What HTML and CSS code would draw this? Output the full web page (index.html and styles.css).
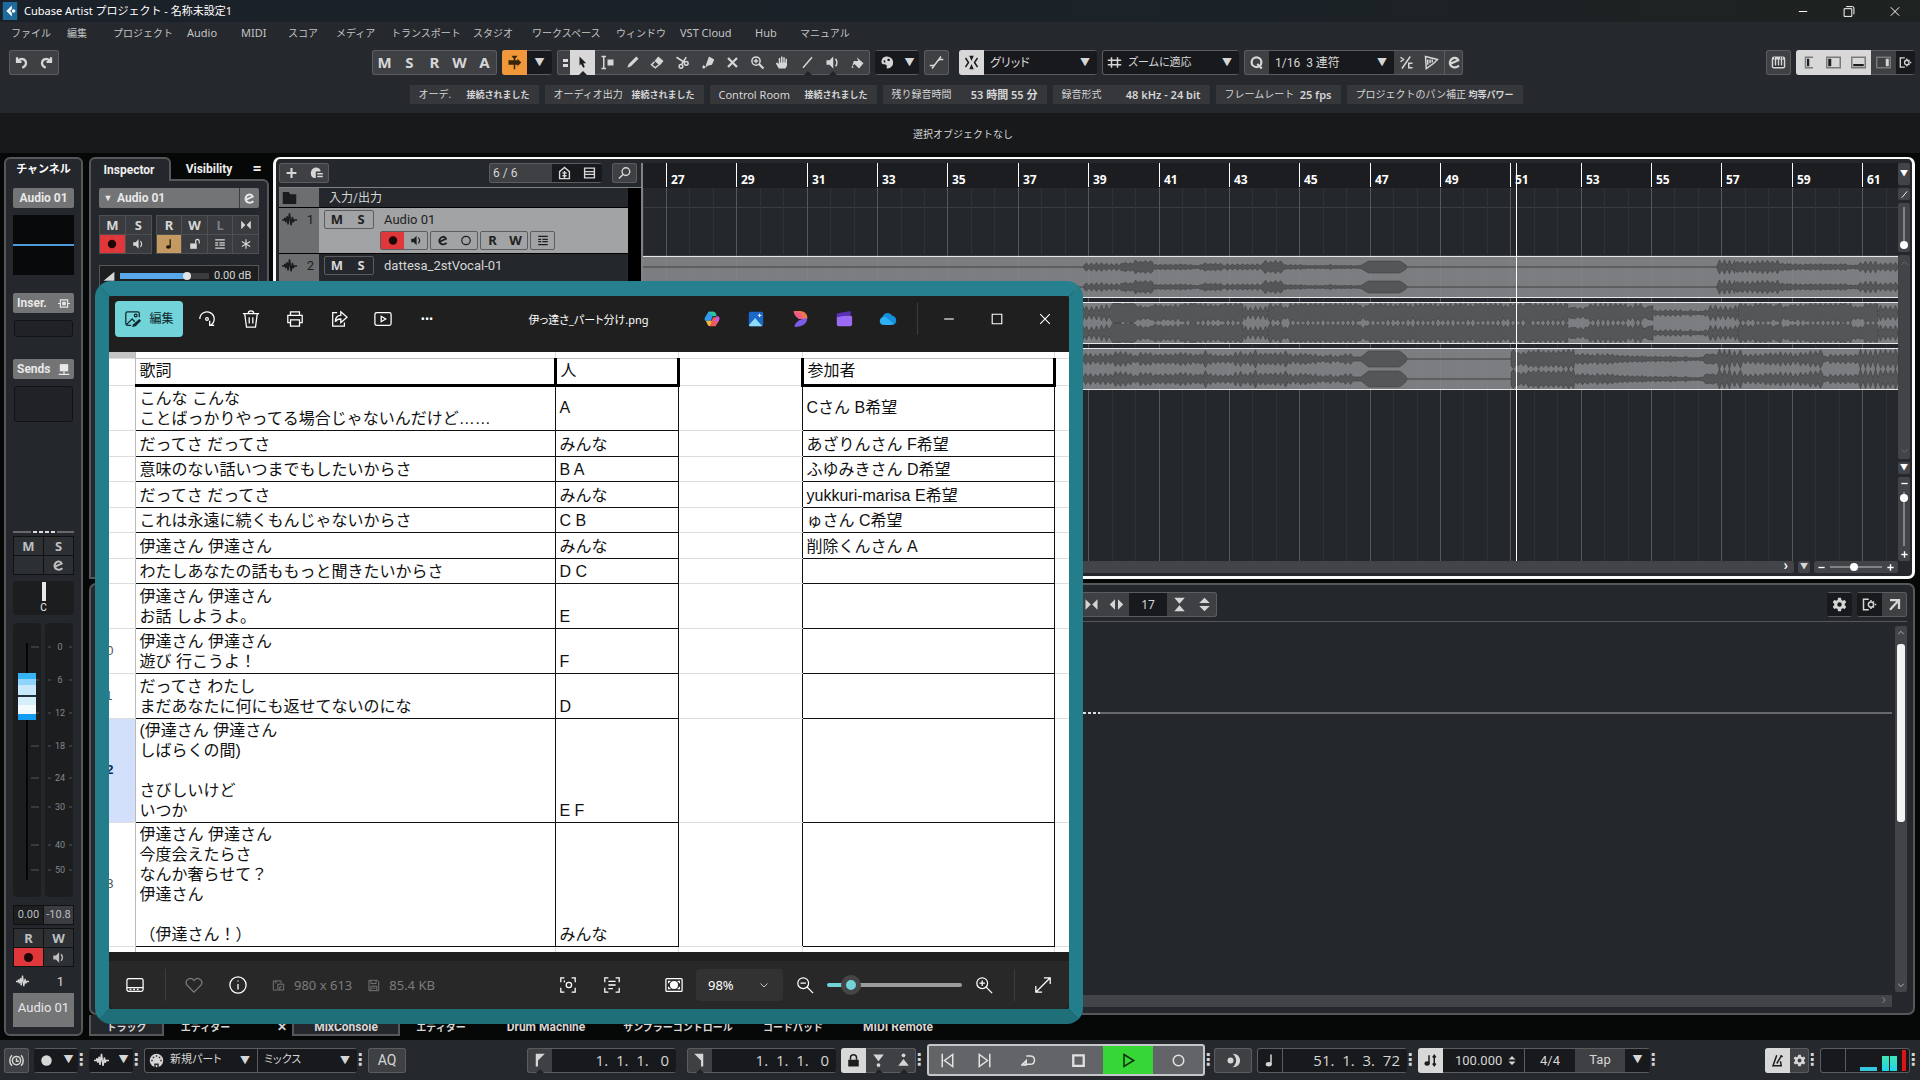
FILE: index.html
```html
<!DOCTYPE html>
<html lang="ja">
<head>
    <meta charset="UTF-8">
    <meta name="viewport" content="width=device-width, initial-scale=1.0">
    <title>Cubase Artist プロジェクト - 名称未設定1</title>
    <link rel="stylesheet" href="styles.css">
</head>
<body>
    <!-- icons -->
    <svg class="sprite" width="0" height="0">
        <symbol id="i-undo" viewBox="0 0 20 20"><path class="s3" d="M4 3v6h6M5 8c3-4 11-4 11 3 0 4-3 5-5 6"/></symbol>
        <symbol id="i-redo" viewBox="0 0 20 20"><path class="s3" d="M16 3v6h-6M15 8c-3-4-11-4-11 3 0 4 3 5 5 6"/></symbol>
        <symbol id="i-auto" viewBox="0 0 20 20"><path class="f" d="M6 1h8l-3 4v2h3V5l5 5-5 5v-2h-3v6H9v-6H2V7h7V5z"/></symbol>
        <symbol id="i-arrow" viewBox="0 0 20 20"><path class="f" d="M6 2l9 9h-4l2 5-2 1-3-5-2 2z"/></symbol>
        <symbol id="i-range" viewBox="0 0 20 20"><path class="s" d="M2 2h6M5 2v16M2 18h6"/><path class="f" d="M10 6h8v8h-8z"/></symbol>
        <symbol id="i-pencil" viewBox="0 0 20 20"><path class="f" d="M3 17l2-5L15 2l3 3L8 15z"/></symbol>
        <symbol id="i-eraser" viewBox="0 0 20 20"><path class="f" d="M11 2l7 6-5 6-7-6z"/><path class="s" d="M6 9l-4 4 5 4 5-4"/></symbol>
        <symbol id="i-scissors" viewBox="0 0 20 20"><path class="s" d="M2 3l11 7M9 12l6-9"/><circle class="s" cx="15" cy="11" r="2.5"/><circle class="s" cx="8" cy="15" r="2.5"/></symbol>
        <symbol id="i-glue" viewBox="0 0 20 20"><path class="f" d="M12 2l7 4-3 7-5 1-4 3 2-7zM5 13l2 3a2 2 0 1 1-4 0z"/></symbol>
        <symbol id="i-x" viewBox="0 0 20 20"><path class="s3" d="M4 4l12 12M16 4L4 16"/></symbol>
        <symbol id="i-zoom" viewBox="0 0 20 20"><circle class="s" cx="8" cy="8" r="5.5"/><path class="s" d="M8 5v6M5 8h6"/><path class="s3" d="M12 12l6 6"/></symbol>
        <symbol id="i-hand" viewBox="0 0 20 20"><path class="f" d="M5 18L1 11l2-1 2 2V4h2v6h1V2h2v8h1V3h2v7h1V5h2v9l-2 4z"/></symbol>
        <symbol id="i-line" viewBox="0 0 20 20"><path class="s" d="M4 17L16 3"/></symbol>
        <symbol id="i-speaker" viewBox="0 0 20 20"><path class="f" d="M2 7h4l5-5v16l-5-5H2z"/><path class="s" d="M14 5q4 5 0 10"/></symbol>
        <symbol id="i-paint" viewBox="0 0 20 20"><path class="f" d="M9 3l9 8-6 7-6-6-3 3 2-7h6zM3 14l2 3H2z"/></symbol>
        <symbol id="i-palette" viewBox="0 0 20 20"><path class="f" fill-rule="evenodd" d="M9 2a8 8 0 1 1 1 16c-3 0 1-4-2-5s-6 0-6-4 3-7 7-7zm-4 5h2v3H5zm5-2h3v3h-3z"/></symbol>
        <symbol id="i-curve" viewBox="0 0 20 20"><path class="s" d="M1 14h4c6 0 4-8 10-8h4M4 18L16 2"/></symbol>
        <symbol id="i-snap" viewBox="0 0 20 20"><path class="s" d="M2 4l4 6-4 6M18 4l-4 6 4 6"/><path class="f" d="M7 1h6l-3 7zM7 19h6l-3-7z"/></symbol>
        <symbol id="i-grid" viewBox="0 0 20 20"><path class="s" d="M6 3v14M14 3v14M1 7h18M1 13h18"/></symbol>
        <symbol id="i-q" viewBox="0 0 20 20"><circle class="s3" cx="10" cy="9.500" r="6.500"/><path class="s3" d="M11 12l6 6"/></symbol>
        <symbol id="i-pct" viewBox="0 0 20 20"><path class="s" d="M4 18L15 2M2 3l4 3-4 3M18 11h-5v6h5"/></symbol>
        <symbol id="i-warp" viewBox="0 0 20 20"><path class="s" d="M2 2l16 4-5 5-10 7zM5 6v7M8 6v5M11 6v4"/></symbol>
        <symbol id="i-e" viewBox="0 0 20 20"><path class="s3" d="M4 12L15 7c-2-5-9-4-11 2-1 7 7 10 12 5"/></symbol>
        <symbol id="i-keys" viewBox="0 0 20 20"><rect class="f" x="1" y="2" width="18" height="16" rx="3"/><path class="k" d="M4 6v9h12V6M8 6v9M12 6v9M4 4h1M12 4h1M15 4h1"/></symbol>
        <symbol id="i-gear" viewBox="0 0 20 20"><path class="f" fill-rule="evenodd" d="M8 1h4l.5 3 2 1L17 4l2 3-2 2v2l2 2-2 3-2.500-1-2 1-.5 3H8l-.5-3-2-1L3 16l-2-3 2-2V9L1 7l2-3 2.500 1 2-1zM10 7a3 3 0 1 0 0 6 3 3 0 0 0 0-6z"/></symbol>
        <symbol id="i-setup" viewBox="0 0 20 20"><path class="s" d="M9 3H2v14h7"/><circle class="s" cx="12" cy="10" r="3.500"/><path class="s" d="M12 4v2M12 14v2M17 10h2M16 6l-1 1M16 14l-1-1"/></symbol>
        <symbol id="i-plus" viewBox="0 0 20 20"><path class="s3" d="M10 3v14M3 10h14"/></symbol>
        <symbol id="i-minus" viewBox="0 0 20 20"><path class="s3" d="M3 10h14"/></symbol>
        <symbol id="i-preset" viewBox="0 0 20 20"><path class="f" d="M9 2a7 7 0 0 1 7 6H9v9C-1 18 0 3 9 2z"/><path class="s" d="M11 11h8M11 15h8"/></symbol>
        <symbol id="i-house" viewBox="0 0 20 20"><path class="s" d="M3 8l7-6 7 6v10H3zM7 10h6M7 14h6M10 7v10"/></symbol>
        <symbol id="i-list" viewBox="0 0 20 20"><path class="s" d="M3 3h14v14H3zM3 8h14M3 12h14"/></symbol>
        <symbol id="i-search" viewBox="0 0 20 20"><circle class="s" cx="12" cy="8" r="5.500"/><path class="s" d="M8 12l-6 6"/></symbol>
        <symbol id="i-folder" viewBox="0 0 20 20"><path class="f" d="M1 2h8l2 3h8v13H1z"/></symbol>
        <symbol id="i-wave" viewBox="0 0 20 20"><path class="s" d="M0 10h3l1-3 1 6 2-8 1 11 2-15 2 16 2-11 1 7 1-3h4"/></symbol>
        <symbol id="i-dot" viewBox="0 0 20 20"><circle class="f" cx="10" cy="10" r="7"/></symbol>
        <symbol id="i-ring" viewBox="0 0 20 20"><circle class="s" cx="10" cy="10" r="7"/></symbol>
        <symbol id="i-note" viewBox="0 0 20 20"><path class="s" d="M12 2v13"/><ellipse class="f" cx="9" cy="15" rx="4" ry="3"/></symbol>
        <symbol id="i-lock" viewBox="0 0 20 20"><path class="f" d="M3 9h14v9H3z"/><path class="s" d="M6 9V6c0-5 8-5 8 0v3"/></symbol>
        <symbol id="i-unlock" viewBox="0 0 20 20"><path class="f" d="M2 9h11v9H2z"/><path class="s" d="M11 9V6c0-5 6-5 6 0v3"/></symbol>
        <symbol id="i-lanes" viewBox="0 0 20 20"><path class="s" d="M2 3h16M2 17h16M2 8h5M9 8h9M2 12h5M9 12h9"/></symbol>
        <symbol id="i-star" viewBox="0 0 20 20"><path class="s" d="M10 2v16M3 6l14 8M17 6L3 14"/></symbol>
        <symbol id="i-bow" viewBox="0 0 20 20"><path class="f" d="M2 3l7 7-7 7zM18 3l-7 7 7 7z"/></symbol>
        <symbol id="i-spread" viewBox="0 0 20 20"><path class="f" d="M8 3v14l-7-7zM12 3v14l7-7z"/></symbol>
        <symbol id="i-hourglass" viewBox="0 0 20 20"><path class="f" d="M3 1h14l-7 8zM3 19h14l-7-8z"/></symbol>
        <symbol id="i-updown" viewBox="0 0 20 20"><path class="f" d="M10 1l7 7H3zM10 19l7-7H3z"/></symbol>
        <symbol id="i-popout" viewBox="0 0 20 20"><path class="s3" d="M4 4h12v12M16 4L4 17"/></symbol>
        <symbol id="i-insert" viewBox="0 0 20 20"><path class="s" d="M4 4h12v12H4zM0 10h4M16 10h4"/><path class="f" d="M7 7h6v6H7z"/></symbol>
        <symbol id="i-send" viewBox="0 0 20 20"><path class="f" d="M3 1h14v12H3z"/><path class="s" d="M1 18h18M10 13v5"/></symbol>
        <symbol id="i-ramp" viewBox="0 0 20 20"><path class="f" d="M1 18L19 3v15z"/></symbol>
        <symbol id="i-clock" viewBox="0 0 20 20"><circle class="s" cx="10" cy="10" r="5.500"/><path class="s" d="M10 7v4h3M4 3c-4 4-4 10 0 14M16 3c4 4 4 10 0 14"/></symbol>
        <symbol id="i-midi" viewBox="0 0 20 20"><circle class="f" cx="10" cy="10" r="9"/><path class="k" d="M3 10h2M5 6h2M9 4h2M13 6h2M15 10h2M8 19v-4h4v4"/></symbol>
        <symbol id="i-locl" viewBox="0 0 20 20"><path class="f" d="M5 1h12L8 10v8H5z"/></symbol>
        <symbol id="i-locr" viewBox="0 0 20 20"><path class="f" d="M15 1H3l9 9v8h3z"/></symbol>
        <symbol id="i-pin" viewBox="0 0 20 20"><path class="f" d="M3 2h14l-7 9z"/><circle class="f" cx="10" cy="16" r="2.500"/></symbol>
        <symbol id="i-pout" viewBox="0 0 20 20"><path class="f" d="M3 17h14l-7-9z"/><circle class="f" cx="10" cy="3" r="2.500"/></symbol>
        <symbol id="i-prev" viewBox="0 0 20 20"><path class="s" d="M3 1v18M17 2v16L6 10z"/></symbol>
        <symbol id="i-next" viewBox="0 0 20 20"><path class="s" d="M17 1v18M3 2v16l11-8z"/></symbol>
        <symbol id="i-cycle" viewBox="0 0 20 20"><path class="s" d="M7 4h5c8 0 8 11 0 11H4M1 16l6-6v6z"/></symbol>
        <symbol id="i-stop" viewBox="0 0 20 20"><path class="s3" d="M3 3h14v14H3z"/></symbol>
        <symbol id="i-play" viewBox="0 0 20 20"><path class="s" d="M4 2l13 8-13 8z"/></symbol>
        <symbol id="i-moon" viewBox="0 0 20 20"><circle class="f" cx="6" cy="10" r="4"/><path class="f" d="M9 1c13 0 13 18 0 18 6-5 6-13 0-18z"/></symbol>
        <symbol id="i-tempo" viewBox="0 0 20 20"><path class="s" d="M8 3v11M15 4v12M13 6l2-3 2 3M13 14l2 3 2-3"/><ellipse class="f" cx="5.500" cy="14" rx="3.500" ry="3"/></symbol>
        <symbol id="i-metro" viewBox="0 0 20 20"><path class="s" d="M9 3L4 17h11l-1-6M9 14l6-10M14 3l3 2"/></symbol>
        <!-- viewer -->
        <symbol id="i-edit" viewBox="0 0 20 20"><path class="t" d="M17 8V4a2 2 0 0 0-2-2H4a2 2 0 0 0-2 2v11a2 2 0 0 0 2 2h4M3 16l6-6 3 3"/><circle class="t" cx="13" cy="6" r="1.500"/><path class="f" d="M17 10l2 2-6 6-4 1 1-3z"/></symbol>
        <symbol id="i-rotate" viewBox="0 0 20 20"><path class="t" d="M2 10a8 8 0 1 1 12 7M13 12v5h5"/><circle class="t" cx="10" cy="10" r="1.500"/></symbol>
        <symbol id="i-trash" viewBox="0 0 20 20"><path class="t" d="M1 4h18M7 4c0-4 6-4 6 0M3 4l2 15h10l2-15M8 8v7M12 8v7"/></symbol>
        <symbol id="i-print" viewBox="0 0 20 20"><path class="t" d="M5 6V2h10v4M5 14H2V6h16v8h-3M5 11h10v7H5z"/></symbol>
        <symbol id="i-share" viewBox="0 0 20 20"><path class="t" d="M8 3H3v15h13v-4M12 2l7 6-7 6v-4c-3 0-5 1-6 3 0-4 2-7 6-7z"/></symbol>
        <symbol id="i-slides" viewBox="0 0 20 20"><rect class="t" x="1" y="3" width="18" height="14" rx="2"/><path class="t" d="M8 7l5 3-5 3z"/></symbol>
        <symbol id="i-min" viewBox="0 0 20 20"><path class="t" d="M4 10h12"/></symbol>
        <symbol id="i-max" viewBox="0 0 20 20"><path class="t" d="M4 4h12v12H4z"/></symbol>
        <symbol id="i-restore" viewBox="0 0 20 20"><path class="t" d="M3 6h11v11H3zM6 3h9a2 2 0 0 1 2 2v9"/></symbol>
        <symbol id="i-close" viewBox="0 0 20 20"><path class="t" d="M4 4l12 12M16 4L4 16"/></symbol>
        <symbol id="i-film" viewBox="0 0 20 20"><rect class="t" x="1" y="3" width="18" height="14" rx="2"/><path class="t" d="M1 13h18M4 15h2M8 15h2M12 15h2"/></symbol>
        <symbol id="i-heart" viewBox="0 0 20 20"><path class="t" d="M10 18l-8-8c-3-6 5-10 8-5 3-5 11-1 8 5z"/></symbol>
        <symbol id="i-info" viewBox="0 0 20 20"><circle class="t" cx="10" cy="10" r="9"/><path class="t" d="M10 9v6M10 5v1"/></symbol>
        <symbol id="i-dims" viewBox="0 0 20 20"><path class="t" d="M8 17H2V3h12v4M6 3v4M9 8h9v9H9zM12 17v-5h3"/></symbol>
        <symbol id="i-disk" viewBox="0 0 20 20"><path class="t" d="M3 2h13l2 2v14H3zM6 2v5h8V2M6 18v-7h9v7M8 14h5"/></symbol>
        <symbol id="i-scan" viewBox="0 0 20 20"><path class="t" d="M2 7V2h4M14 2h4v5M18 13v5h-4M6 18H2v-5"/><circle class="t" cx="11" cy="10" r="3"/><path class="t" d="M6 5v2"/></symbol>
        <symbol id="i-text" viewBox="0 0 20 20"><path class="t" d="M2 7V2h4M14 2h4v5M18 13v5h-4M6 18H2v-5M6 6h8M6 10h8M6 14h5"/></symbol>
        <symbol id="i-fit" viewBox="0 0 20 20"><rect class="t" x="1" y="3" width="18" height="14" rx="1"/><circle class="f" cx="10" cy="10" r="4.500"/><path class="t" d="M4 8V6h2M16 8V6h-2M4 12v2h2M16 12v2h-2"/></symbol>
        <symbol id="i-zout" viewBox="0 0 20 20"><circle class="t" cx="8" cy="8" r="6"/><path class="t" d="M5 8h6M12 12l7 7"/></symbol>
        <symbol id="i-zin" viewBox="0 0 20 20"><circle class="t" cx="8" cy="8" r="6"/><path class="t" d="M5 8h6M8 5v6M12 12l7 7"/></symbol>
        <symbol id="i-full" viewBox="0 0 20 20"><path class="t" d="M11 2h7v7M18 2L2 18M2 11v7h7"/></symbol>
        <symbol id="i-chev" viewBox="0 0 20 20"><path class="t" d="M3 7l7 7 7-7"/></symbol>
    </svg>

    <header class="top">
        <div class="titlebar">
            <svg class="logo" viewBox="0 0 16 20"><rect width="16" height="20" fill="#1f6a9c"/><path d="M10 4l-6 6 6 6v-4l-2-2 2-2z" fill="#fff"/><circle cx="12" cy="10" r="2" fill="#fff"/></svg>
            <h1>Cubase Artist プロジェクト - 名称未設定1</h1>
            <div class="winbtns">
                <button aria-label="最小化"><svg><use href="#i-min"/></svg></button>
                <button aria-label="元に戻す"><svg><use href="#i-restore"/></svg></button>
                <button aria-label="閉じる"><svg><use href="#i-close"/></svg></button>
            </div>
        </div>
        <nav class="menu">
            <a href="#">ファイル</a><a href="#">編集</a><a href="#">プロジェクト</a><a href="#" class="en">Audio</a><a href="#" class="en">MIDI</a><a href="#">スコア</a><a href="#">メディア</a><a href="#">トランスポート</a><a href="#">スタジオ</a><a href="#">ワークスペース</a><a href="#">ウィンドウ</a><a href="#" class="en">VST Cloud</a><a href="#" class="en">Hub</a><a href="#">マニュアル</a>
        </nav>
        <div class="toolbar">
            <div class="grp undo"><button><svg><use href="#i-undo"/></svg></button><button><svg><use href="#i-redo"/></svg></button></div>
            <div class="grp msr"><button>M</button><button>S</button><button>R</button><button>W</button><button>A</button></div>
            <div class="grp"><button class="orange"><svg><use href="#i-auto"/></svg></button><button class="dark tri">▼</button></div>
            <div class="grp">
                <span class="handle"></span>
                <button class="on mark"><svg><use href="#i-arrow"/></svg></button>
                <button><svg><use href="#i-range"/></svg></button>
                <button><svg><use href="#i-pencil"/></svg></button>
                <button><svg><use href="#i-eraser"/></svg></button>
                <button><svg><use href="#i-scissors"/></svg></button>
                <button><svg><use href="#i-glue"/></svg></button>
                <button><svg><use href="#i-x"/></svg></button>
                <button><svg><use href="#i-zoom"/></svg></button>
                <button><svg><use href="#i-hand"/></svg></button>
                <button class="mark"><svg><use href="#i-line"/></svg></button>
                <button class="mark"><svg><use href="#i-speaker"/></svg></button>
                <button><svg><use href="#i-paint"/></svg></button>
            </div>
            <div class="grp dark"><button class="dark"><svg><use href="#i-palette"/></svg></button><button class="dark tri sm">▼</button></div>
            <div class="grp"><button><svg><use href="#i-curve"/></svg></button></div>
            <div class="grp snap"><button class="on"><svg><use href="#i-snap"/></svg></button><label class="pick w113"><select aria-label="スナップ"><option>グリッド</option></select></label></div>
            <div class="grp dark"><span class="ic"><svg><use href="#i-grid"/></svg></span><label class="pick w112"><select aria-label="グリッドの種類"><option>ズームに適応</option></select></label></div>
            <div class="grp"><button><svg><use href="#i-q"/></svg></button><label class="pick w125"><select aria-label="クオンタイズ"><option>1/16&nbsp; 3 連符</option></select></label><button><svg><use href="#i-pct"/></svg></button><button><svg><use href="#i-warp"/></svg></button><button class="sep"><svg><use href="#i-e"/></svg></button></div>
            <div class="grp right"><button><svg><use href="#i-keys"/></svg></button></div>
            <div class="grp zones">
                <button class="on"><svg viewBox="0 0 20 20"><path class="z" d="M16 3H6v14h10"/><path class="zf" d="M8 5h3v10H8z"/></svg></button>
                <button class="on"><svg viewBox="0 0 20 20"><path class="z" d="M1 3h18v14H1z"/><path class="zf" d="M3 5h4v10H3z"/></svg></button>
                <button class="on"><svg viewBox="0 0 20 20"><path class="z" d="M1 3h18v14H1z"/><path class="zf" d="M3 12h14v3H3z"/></svg></button>
                <button><svg viewBox="0 0 20 20"><path class="z" d="M1 3h18v14H1z"/><path class="f" d="M13 5h4v10h-4z"/></svg></button>
                <button class="dark small"><svg><use href="#i-setup"/></svg></button>
            </div>
        </div>
        <ul class="status">
            <li>オーデ.<b>接続されました</b></li>
            <li>オーディオ出力<b>接続されました</b></li>
            <li class="en">Control Room<b>接続されました</b></li>
            <li>残り録音時間<b class="en">53 時間 55 分</b></li>
            <li>録音形式<b class="en">48 kHz - 24 bit</b></li>
            <li>フレームレート<b class="en">25 fps</b></li>
            <li>プロジェクトのパン補正<b>均等パワー</b></li>
        </ul>
    </header>
    <div class="infoline">選択オブジェクトなし</div>

    <main class="workspace">
        <aside class="channel">
            <h2>チャンネル</h2>
            <div class="tag">Audio 01</div>
            <div class="eq"></div>
            <button class="tag rack">Inser.<svg><use href="#i-insert"/></svg></button>
            <div class="slot"></div>
            <button class="tag rack sends">Sends<svg><use href="#i-send"/></svg></button>
            <div class="slot tall"></div>
            <div class="dash"></div>
            <div class="cells"><button>M</button><button>S</button><button aria-label="空"></button><button><svg><use href="#i-e"/></svg></button></div>
            <div class="pan"><i></i>C</div>
            <div class="fader">
                <svg class="scale" id="scale" viewBox="0 0 61 274"></svg>
                <input type="range" aria-label="フェーダー" min="0" max="100" value="82">
            </div>
            <div class="cells vals"><span>0.00</span><span class="lit">-10.8</span></div>
            <div class="cells"><button>R</button><button>W</button><button class="rec"><svg><use href="#i-dot"/></svg></button><button><svg><use href="#i-speaker"/></svg></button></div>
            <div class="num"><svg><use href="#i-wave"/></svg>1</div>
            <div class="name">Audio 01</div>
        </aside>

        <div class="stack">
            <div class="upper">
                <aside class="inspector">
                    <div class="tabs"><button class="active">Inspector</button><button class="vis">Visibility</button><button class="eqs">=</button></div>
                    <div class="inbody">
                        <div class="trk"><span class="tri">▼</span>Audio 01<button><svg><use href="#i-e"/></svg></button></div>
                        <div class="ingrid">
                            <div class="g2"><button>M</button><button>S</button><button class="rec"><svg><use href="#i-dot"/></svg></button><button><svg><use href="#i-speaker"/></svg></button></div>
                            <div class="g4"><button>R</button><button>W</button><button class="dim">L</button><button><svg><use href="#i-bow"/></svg></button><button class="tan"><svg><use href="#i-note"/></svg></button><button><svg><use href="#i-unlock"/></svg></button><button><svg><use href="#i-lanes"/></svg></button><button><svg><use href="#i-star"/></svg></button></div>
                        </div>
                        <div class="vol"><svg><use href="#i-ramp"/></svg><input type="range" aria-label="音量" min="0" max="100" value="78"><span>0.00 dB</span></div>
                    </div>
                </aside>

                <section class="project">
                    <div class="tracklist">
                        <div class="tlbar">
                            <div class="grp low"><button><svg><use href="#i-plus"/></svg></button><button><svg><use href="#i-preset"/></svg></button></div>
                            <div class="grp low count"><span>6 / 6</span><button class="dark"><svg><use href="#i-house"/></svg></button><button class="dark"><svg><use href="#i-list"/></svg></button></div>
                            <div class="grp low"><button><svg><use href="#i-search"/></svg></button></div>
                        </div>
                        <div class="tracks">
                            <div class="track io"><div class="no"><svg><use href="#i-folder"/></svg></div><p>入力/出力</p></div>
                            <div class="track sel">
                                <div class="no"><svg><use href="#i-wave"/></svg>1</div>
                                <div class="ms"><button>M</button><button>S</button></div>
                                <div class="tinfo"><p>Audio 01</p>
                                    <div class="row"><div class="ms"><button class="rec"><svg><use href="#i-dot"/></svg></button><button><svg><use href="#i-speaker"/></svg></button></div><div class="ms"><button><svg><use href="#i-e"/></svg></button><button><svg><use href="#i-ring"/></svg></button></div><div class="ms"><button>R</button><button>W</button></div><div class="ms"><button><svg><use href="#i-lanes"/></svg></button></div></div>
                                </div>
                            </div>
                            <div class="track">
                                <div class="no"><svg><use href="#i-wave"/></svg>2</div>
                                <div class="ms"><button>M</button><button>S</button></div>
                                <div class="tinfo"><p>dattesa_2stVocal-01</p></div>
                            </div>
                        </div>
                    </div>
                    <div class="timeline">
                        <div class="ruler" id="ruler"></div>
                        <div class="arrange" id="arrange">
                            <div class="lane first"></div>
                            <div class="lane"></div>
                            <svg class="clip" preserveAspectRatio="none" viewBox="0 0 1255 40"></svg>
                            <svg class="clip" preserveAspectRatio="none" viewBox="0 0 1255 40"></svg>
                            <svg class="clip" preserveAspectRatio="none" viewBox="0 0 1255 40"></svg>
                        </div>
                        <div class="hbar"><span class="track-h">&rsaquo;</span><button class="tri">▼</button><span class="zoomh"><svg><use href="#i-minus"/></svg><input type="range" aria-label="横ズーム" value="46"><svg><use href="#i-plus"/></svg></span></div>
                    </div>
                    <div class="vbar">
                        <button class="tri">▼</button>
                        <button class="sq"><svg><use href="#i-line"/></svg></button>
                        <span class="vz short"><input type="range" aria-label="波形ズーム" value="0"></span>
                        <span class="vscroll"><svg class="flip"><use href="#i-chev"/></svg><svg><use href="#i-chev"/></svg></span>
                        <button class="sq tri">▼</button>
                        <span class="vz"><svg><use href="#i-minus"/></svg><input type="range" aria-label="縦ズーム" value="96"><svg><use href="#i-plus"/></svg></span>
                    </div>
                </section>
            </div>

            <section class="lower">
                <div class="lowbar">
                    <div class="grp"><button><svg><use href="#i-bow"/></svg></button><button><svg><use href="#i-spread"/></svg></button><span class="field w38">17</span><button><svg><use href="#i-hourglass"/></svg></button><button><svg><use href="#i-updown"/></svg></button></div>
                    <div class="grp dark right"><button class="dark"><svg><use href="#i-gear"/></svg></button></div>
                    <div class="grp"><button class="dark"><svg><use href="#i-setup"/></svg></button><button><svg><use href="#i-popout"/></svg></button></div>
                </div>
                <div class="lowbody">
                    <div class="mixarea"><div class="rule"></div></div>
                    <div class="vthumb"><svg class="flip"><use href="#i-chev"/></svg><i></i><svg><use href="#i-chev"/></svg></div>
                </div>
                <div class="lowscroll">&rsaquo;</div>
            </section>
            <nav class="lowtabs">
                <a href="#" class="box t1">トラック</a><a href="#" class="t2">エディター</a><a href="#" class="t3">✕</a><a href="#" class="box t4">MixConsole</a><a href="#" class="t5">エディター</a><a href="#" class="t6">Drum Machine</a><a href="#" class="t7">サンプラーコントロール</a><a href="#" class="t8">コードパッド</a><a href="#" class="t9">MIDI Remote</a>
            </nav>
        </div>
    </main>

    <footer class="transport">
        <div class="grp"><button><svg><use href="#i-clock"/></svg></button></div>
        <div class="grp dark m5"><button class="dark"><svg><use href="#i-dot"/></svg></button><button class="dark tri sm">▼</button></div><span class="dots">⋮</span>
        <div class="grp dark m5"><button class="dark"><svg><use href="#i-wave"/></svg></button><button class="dark tri sm">▼</button></div><span class="dots">⋮</span>
        <div class="grp dark m5"><span class="ic"><svg><use href="#i-midi"/></svg></span><label class="pick w88"><select aria-label="MIDI録音"><option>新規パート</option></select></label><label class="pick w100 sep"><select aria-label="録音モード"><option>ミックス</option></select></label></div><span class="dots">⋮</span>
        <div class="grp m5"><button class="aq">AQ</button></div>
        <div class="grp loc"><button class="mark"><svg><use href="#i-locl"/></svg></button><span class="field pos">1.  1.  1.   0</span></div>
        <div class="grp m11"><button class="mark"><svg><use href="#i-locr"/></svg></button><span class="field pos">1.  1.  1.   0</span></div>
        <div class="grp m5"><button class="on"><svg><use href="#i-lock"/></svg></button><button class="mark"><svg><use href="#i-pin"/></svg></button><button class="mark"><svg><use href="#i-pout"/></svg></button></div><span class="dots">⋮</span>
        <div class="play">
            <button><svg><use href="#i-prev"/></svg></button><button><svg><use href="#i-next"/></svg></button><button class="wide"><svg><use href="#i-cycle"/></svg></button><button class="wide"><svg><use href="#i-stop"/></svg></button><button class="wide go"><svg><use href="#i-play"/></svg></button><button class="wide"><svg><use href="#i-ring"/></svg></button>
        </div><span class="dots">⋮</span>
        <div class="grp m3"><button class="moon"><svg><use href="#i-moon"/></svg></button></div>
        <div class="grp dark m5"><span class="ic"><svg><use href="#i-note"/></svg></span><span class="field time sep">51.  1.  3.  72</span></div><span class="dots">⋮</span>
        <div class="grp m5"><button class="on"><svg><use href="#i-tempo"/></svg></button><span class="field tempo">100.000<svg><use href="#i-updown"/></svg></span><span class="field sig sep">4/4</span><button class="tap">Tap</button><button class="dark tri">▼</button></div><span class="dots">⋮</span>
        <div class="grp right"><button class="on"><svg><use href="#i-metro"/></svg></button><button class="small"><svg><use href="#i-gear"/></svg></button></div><span class="dots">⋮</span>
        <div class="grp dark m5 meter"><i class="cell"></i><i class="b1"></i><i class="b2"></i><i class="b2"></i><i class="b3"></i></div><span class="dots">⋮</span>
    </footer>

    <!-- photo viewer -->
    <div class="viewer">
        <div class="vhead">
            <button class="edit"><svg><use href="#i-edit"/></svg>編集</button>
            <button><svg><use href="#i-rotate"/></svg></button>
            <button><svg><use href="#i-trash"/></svg></button>
            <button><svg><use href="#i-print"/></svg></button>
            <button><svg><use href="#i-share"/></svg></button>
            <button><svg><use href="#i-slides"/></svg></button>
            <button class="more">•••</button>
            <span class="fname">伊っ達さ_パート分け.png</span>
            <button><svg viewBox="0 0 20 20"><path d="M6 2h6l-3 10H3C1 12 2 8 3 7z" fill="#2f9bf0"/><path d="M6 2h6c2 0 3 3 3 5h-4z" fill="#2ec4a0"/><path d="M14 18H8l3-10h6c2 0 1 4 0 5z" fill="#f2585b"/><path d="M3 12h7l-2 6c-3 0-3-3-5-6z" fill="#f5b73b"/><path d="M15 7h2c2 1 1 4 0 6h-4z" fill="#c95bd8"/></svg></button>
            <button><svg viewBox="0 0 20 20"><rect x="2" y="2" width="16" height="16" rx="2" fill="#1c68c9"/><path d="M2 17l7-8 8 9H3z" fill="#8fdcf8"/><path d="M14 4v4M12 6h4" stroke="#fff"/></svg></button>
            <button><svg viewBox="0 0 20 20"><path d="M3 1h7c6 0 9 5 8 9H9z" fill="#f0764e"/><path d="M9 10c-3-2-6-5-6-9 7 1 10 4 10 9z" fill="#ee5a8a"/><path d="M18 9c0 6-5 10-14 10 0-5 5-9 14-10z" fill="#7b5bea"/></svg></button>
            <button><svg viewBox="0 0 20 20"><rect x="2" y="6" width="17" height="12" rx="2" fill="#9b6bf5"/><path d="M2 6V4l15-3 1 4-16 3z" fill="#5c2fb8"/></svg></button>
            <button><svg viewBox="0 0 22 20"><path d="M5 17a5 5 0 0 1-1-9c2-6 9-7 12-2 6 0 7 10 1 11z" fill="#1490df"/><path d="M4 8c3-2 6 0 7 2l7 6c-2 2-14 1-14 1-4-1-4-7 0-9z" fill="#2fb0f5"/></svg></button>
            <span class="vsep"></span>
            <button class="wb"><svg><use href="#i-min"/></svg></button><button class="wb"><svg><use href="#i-max"/></svg></button><button class="wb"><svg><use href="#i-close"/></svg></button>
        </div>
        <div class="sheet">
            <table>
                <colgroup><col class="c0"><col class="c1"><col class="c2"><col class="c3"><col class="c4"><col class="c5"></colgroup>
                <tr class="cut"><th class="corner"></th><td></td><td></td><td></td><td></td><td></td></tr>
                <tr class="hd"><th></th><td class="k">歌詞</td><td class="k">人</td><td></td><td class="k">参加者</td><td></td></tr>
                <tr class="r45"><th></th><td class="c">こんな こんな<br>ことばっかりやってる場合じゃないんだけど……</td><td class="c mid">A</td><td class="gap"></td><td class="c mid">Cさん B希望</td><td></td></tr>
                <tr><th></th><td class="c">だってさ だってさ</td><td class="c">みんな</td><td class="gap"></td><td class="c">あざりんさん F希望</td><td></td></tr>
                <tr><th></th><td class="c">意味のない話いつまでもしたいからさ</td><td class="c">B A</td><td class="gap"></td><td class="c">ふゆみきさん D希望</td><td></td></tr>
                <tr><th></th><td class="c">だってさ だってさ</td><td class="c">みんな</td><td class="gap"></td><td class="c">yukkuri-marisa E希望</td><td></td></tr>
                <tr><th></th><td class="c">これは永遠に続くもんじゃないからさ</td><td class="c">C B</td><td class="gap"></td><td class="c">ゅさん C希望</td><td></td></tr>
                <tr><th></th><td class="c">伊達さん 伊達さん</td><td class="c">みんな</td><td class="gap"></td><td class="c">削除くんさん A</td><td></td></tr>
                <tr><th></th><td class="c">わたしあなたの話ももっと聞きたいからさ</td><td class="c">D C</td><td class="gap"></td><td class="c"></td><td></td></tr>
                <tr class="r45"><th></th><td class="c">伊達さん 伊達さん<br>お話 しようよ。</td><td class="c">E</td><td class="gap"></td><td class="c"></td><td></td></tr>
                <tr class="r45"><th>10</th><td class="c">伊達さん 伊達さん<br>遊び 行こうよ！</td><td class="c">F</td><td class="gap"></td><td class="c"></td><td></td></tr>
                <tr class="r45"><th>11</th><td class="c">だってさ わたし<br>まだあなたに何にも返せてないのにな</td><td class="c">D</td><td class="gap"></td><td class="c"></td><td></td></tr>
                <tr class="r104"><th class="cur">12</th><td class="c">(伊達さん 伊達さん<br>しばらくの間)<br><br>さびしいけど<br>いつか</td><td class="c">E F</td><td class="gap"></td><td class="c"></td><td></td></tr>
                <tr class="r124"><th>13</th><td class="c">伊達さん 伊達さん<br>今度会えたらさ<br>なんか奢らせて？<br>伊達さん<br><br>（伊達さん！）</td><td class="c">みんな</td><td class="gap"></td><td class="c"></td><td></td></tr>
                <tr class="cut"><th></th><td></td><td></td><td></td><td></td><td></td></tr>
            </table>
        </div>
        <div class="vfoot">
            <button><svg><use href="#i-film"/></svg></button>
            <span class="vsep"></span>
            <button class="gray"><svg><use href="#i-heart"/></svg></button>
            <button><svg><use href="#i-info"/></svg></button>
            <span class="meta"><svg><use href="#i-dims"/></svg>980 x 613</span>
            <span class="meta"><svg><use href="#i-disk"/></svg>85.4 KB</span>
            <button class="right"><svg><use href="#i-scan"/></svg></button>
            <button><svg><use href="#i-text"/></svg></button>
            <button class="fit"><svg><use href="#i-fit"/></svg></button>
            <button class="pct">98%<svg><use href="#i-chev"/></svg></button>
            <button><svg><use href="#i-zout"/></svg></button>
            <input type="range" aria-label="ズーム" min="0" max="100" value="12">
            <button><svg><use href="#i-zin"/></svg></button>
            <span class="vsep"></span>
            <button><svg><use href="#i-full"/></svg></button>
        </div>
    </div>
    <script src="script.js"></script>
</body>
</html>
```
FILE: styles.css
```css
*{
    box-sizing: border-box;
    margin: 0;
    padding: 0;
    list-style: none;
}
body{
    display: flex;
    flex-direction: column;
    min-height: 100vh;
    background-color: #060707;
    color: #d6d6d6;
    font: 13px/16px Roboto, "Noto Sans CJK JP", sans-serif;
    font-feature-settings: "palt";
    overflow: hidden;
    position: relative;
}
button, select, input{
    font: inherit;
    color: inherit;
    border: 0;
    background: none;
}
button{
    display: flex;
    align-items: center;
    justify-content: center;
    flex-shrink: 0;
}
a{
    color: inherit;
    text-decoration: none;
}
.sprite{
    position: absolute;
}
svg{
    width: 15px;
    height: 15px;
    flex-shrink: 0;
}
.f{ fill: currentColor; }
.s{ fill: none; stroke: currentColor; stroke-width: 2; }
.s3{ fill: none; stroke: currentColor; stroke-width: 3; }
.t{ fill: none; stroke: currentColor; stroke-width: 1.4; }
.k{ fill: none; stroke: #2b2d30; stroke-width: 2; }
.z{ fill: none; stroke: #77797b; stroke-width: 2; }
.zf{ fill: #1d1e20; }
.right{ margin-left: auto; }

/* ---- top ---- */
.top{
    background-color: #25282c;
    height: 113px;
}
.titlebar{
    height: 22px;
    display: flex;
    align-items: center;
    background: linear-gradient(90deg, #1b2128, #1b2228 60%, #1e2220);
    padding-left: 2px;
}
.titlebar .logo{
    width: 16px;
    height: 18px;
}
.titlebar h1{
    font: 11px/18px "Noto Sans", "Noto Sans CJK JP", sans-serif;
    color: #fff;
    margin-left: 6px;
}
.winbtns{
    margin-left: auto;
    display: flex;
    color: #fff;
}
.winbtns button{
    width: 46px;
    height: 20px;
}
.winbtns svg{
    width: 14px;
}
.winbtns button:last-child{
    margin-right: 2px;
}
.menu{
    height: 22px;
    margin-bottom: 1px;
    display: grid;
    grid-template-columns: 56px 46px 74px 54px 47px 48px 55px 82px 59px 84px 64px 75px 45px 60px;
    align-items: center;
    padding-left: 11px;
    font: 10px/16px "Noto Sans", "Noto Sans CJK JP", sans-serif;
    color: #c2c4c5;
    white-space: nowrap;
}
.menu .en{
    font-size: 11px;
}
.toolbar{
    display: flex;
    gap: 5px;
    padding: 5px 5px 0 9px;
    height: 40px;
}
.grp{
    display: flex;
    height: 25px;
    background-color: #3e4043;
    border-radius: 3px;
    box-shadow: inset 0 0 0 1px #5a5c5f;
    overflow: hidden;
    flex-shrink: 0;
}
.grp button, .ic{
    width: 25px;
    display: flex;
    align-items: center;
    justify-content: center;
    position: relative;
}
.undo{
    margin-right: 308px;
}
.grp.dark, .grp .dark, .field{
    background-color: #18191c;
}
.grp .dark, .field{
    box-shadow: inset 0 1px #5a5c5f, inset 0 -1px #5a5c5f;
}
.msr button{
    font: bold 15px/25px "Noto Sans", sans-serif;
}
.grp .orange{
    background-color: #f0983a;
    color: #3a2508;
}
.grp .on{
    background-color: #d8d8d8;
    color: #1c1d1f;
}
.mark::after{
    content: "";
    position: absolute;
    bottom: 0;
    left: 9px;
    border: 4px solid transparent;
    border-bottom-color: #202225;
    border-top: 0;
}
.tri{
    font-size: 10px;
}
.grp .sm{
    width: 19px;
}
.handle{
    width: 13px;
    background: linear-gradient(#ddd 0 0) 6px 9px/5px 3px no-repeat, linear-gradient(#ddd 0 0) 6px 14px/5px 3px no-repeat;
}
.snap{
    margin-left: 5px;
}
.pick{
    position: relative;
    display: block;
    background-color: #18191c;
    box-shadow: inset 0 1px #5a5c5f, inset 0 -1px #5a5c5f;
}
.pick::after{
    content: "▼";
    position: absolute;
    right: 7px;
    top: 5px;
    font-size: 10px;
}
.pick select{
    appearance: none;
    width: 100%;
    height: 25px;
    padding-left: 6px;
    font-size: 12px;
}
.w113{ width: 113px; }
.w112{ width: 112px; }
.w125{ width: 125px; }
.w88{ width: 88px; }
.w100{ width: 100px; }
.w38{ width: 38px; }
.pick.w88 select, .pick.w112 select{
    padding-left: 1px;
    font-size: 11px;
}
.pick.w100 select{
    font-size: 11px;
}
.grp .sep{
    border-left: 1px solid #5a5c5f;
}
.toolbar .sep{
    width: 19px;
}
.zones .on svg, .zones button svg{
    width: 17px;
}
.grp .small{
    width: 19px;
}
.grp .small svg{
    width: 13px;
}
.status{
    display: flex;
    justify-content: center;
    gap: 6px;
    padding-left: 12px;
    font: 10px/19px "Noto Sans", "Noto Sans CJK JP", sans-serif;
}
.status li{
    display: flex;
    justify-content: space-between;
    width: 129px;
    height: 19px;
    padding: 0 9px;
    background-color: #35373b;
    white-space: nowrap;
}
.status b{
    font-weight: 600;
    font-size: 9px;
}
.status .en{
    font-size: 11px;
}
.status li:nth-child(2){ width: 159px; }
.status li:nth-child(3){ width: 167px; }
.status li:nth-child(4){ width: 164px; }
.status li:nth-child(5){ width: 157px; }
.status li:nth-child(6){ width: 125px; }
.status li:nth-child(7){ width: 176px; }
.infoline{
    height: 40px;
    background-color: #18191b;
    text-align: center;
    padding-left: 6px;
    font: 10px/42px "Noto Sans", "Noto Sans CJK JP", sans-serif;
}

/* ---- workspace ---- */
.workspace{
    flex: 1;
    display: flex;
    gap: 6px;
    padding: 4px 5px 4px 4px;
}
.channel{
    width: 79px;
    border: 2px solid #55575a;
    border-radius: 6px;
    background-color: #24272b;
    padding: 0 7px 7px 7px;
    display: flex;
    flex-direction: column;
}
.channel h2{
    font: bold 11px/20px "Noto Sans", "Noto Sans CJK JP", sans-serif;
    text-align: center;
    color: #fff;
    height: 29px;
}
.tag{
    height: 20px;
    background-color: #727476;
    border-radius: 2px;
    font: bold 12px/20px Roboto, sans-serif;
    text-align: center;
    color: #e8e8e8;
}
.eq{
    height: 60px;
    margin: 7px 0 18px;
    background: linear-gradient(#4d9bd8 0 0) 0 29px/100% 2px no-repeat #08090a;
}
.rack{
    justify-content: space-between;
    padding: 0 4px;
}
.rack svg{
    width: 12px;
}
.slot{
    height: 17px;
    margin: 7px 1px 22px;
    border: 1px solid #111214;
    border-radius: 3px;
    background-color: #202225;
}
.slot.tall{
    height: 36px;
    margin-bottom: 0;
}
.dash{
    margin-top: auto;
    height: 2px;
    background: repeating-linear-gradient(90deg, #ddd 0 4px, transparent 4px 6px) 20px 0/22px 2px no-repeat, linear-gradient(90deg, #66686b 18px, transparent 18px 44px, #66686b 44px);
}
.cells{
    display: grid;
    grid-template-columns: 1fr 1fr;
    gap: 1px;
    border: 1px solid #101113;
    background-color: #101113;
    margin-top: 3px;
}
.cells button, .cells span{
    background-color: #2d3033;
    height: 18px;
    font: bold 13px/18px "Noto Sans", sans-serif;
    text-align: center;
    color: #bdbfc0;
}
.cells svg{
    width: 13px;
    height: 13px;
}
.vals{
    margin: 8px 0 0;
}
.cells span{
    font: 11px/18px Roboto, sans-serif;
    background-color: #1c1e20;
}
.cells .lit{
    background-color: #3a3c40;
}
.rec, .cells .rec{
    background-color: #e0373b;
    color: #1d0707;
}
.pan{
    height: 34px;
    margin: 6px 0 8px;
    background-color: #1b1d1f;
    border-radius: 4px;
    font: 10px/14px Roboto, sans-serif;
    display: flex;
    flex-direction: column;
    align-items: center;
    color: #eee;
}
.pan i{
    width: 4px;
    height: 19px;
    background-color: #e8e8e8;
    margin-top: 1px;
}
.fader{
    position: relative;
    height: 274px;
}
.fader .scale{
    width: 100%;
    height: 274px;
    display: block;
}
.fader input{
    position: absolute;
    left: 5px;
    top: 14px;
    width: 18px;
    height: 246px;
    appearance: none;
    writing-mode: vertical-lr;
    direction: rtl;
}
.fader input::-webkit-slider-thumb{
    appearance: none;
    width: 18px;
    height: 47px;
    background: linear-gradient(#37b4f5 6px, #8fd4fb 6px 12px, #c8e8fb 12px 22px, #26303a 22px 24px, #d5eefc 24px 32px, #f2fafe 32px 41px, #149cf0 41px);
}
.num{
    display: flex;
    justify-content: space-between;
    padding: 0 10px 0 3px;
    margin: 7px 0 3px;
}
.num svg{
    width: 13px;
}
.name{
    height: 34px;
    background-color: #737577;
    text-align: center;
    line-height: 30px;
    font-size: 13px;
    color: #e8e8e8;
}
.stack{
    flex: 1;
    min-width: 0;
    display: flex;
    flex-direction: column;
}
.upper{
    height: 422px;
    display: flex;
    gap: 4px;
    margin-bottom: 4px;
}

/* ---- inspector ---- */
.inspector{
    width: 180px;
    display: flex;
    flex-direction: column;
}
.tabs{
    display: flex;
    height: 22px;
    position: relative;
}
.tabs button{
    width: 82px;
    font: bold 12px/20px Roboto, sans-serif;
    color: #eee;
    padding-top: 2px;
}
.tabs .active{
    background-color: #24272b;
    border: 2px solid #55575a;
    border-bottom: 0;
    border-radius: 6px 6px 0 0;
    height: 24px;
    padding: 0 2px 0 0;
}
.tabs .vis{
    width: 76px;
}
.tabs .eqs{
    width: 20px;
    font-size: 16px;
}
.inbody{
    flex: 1;
    background-color: #24272b;
    border: 2px solid #55575a;
    border-radius: 0 6px 0 0;
    padding: 7px 8px 0 8px;
}
.trk{
    display: flex;
    height: 20px;
    background-color: #727476;
    border-radius: 2px;
    font: bold 12px/20px Roboto, sans-serif;
    color: #e8e8e8;
}
.trk .tri{
    font-size: 9px;
    width: 18px;
    text-align: center;
}
.trk button{
    margin-left: auto;
    width: 20px;
    border-left: 1px solid #3a3c3f;
}
.trk svg{
    width: 13px;
}
.ingrid{
    display: flex;
    gap: 4px;
    margin-top: 7px;
}
.g2, .g4{
    display: grid;
    grid-template-columns: repeat(2, 1fr);
    gap: 1px;
    background-color: #4d4f52;
    border: 1px solid #4d4f52;
    flex: 1;
}
.g4{
    grid-template-columns: repeat(4, 1fr);
    flex: 2;
}
.ingrid button{
    height: 18px;
    background-color: #393b3e;
    font: bold 13px/18px "Noto Sans", sans-serif;
}
.ingrid svg{
    width: 12px;
    height: 12px;
}
.ingrid .rec{
    background-color: #e0373b;
}
.ingrid .tan{
    background-color: #c39a62;
    color: #1c1408;
}
.ingrid .dim{
    color: #7d7f82;
}
.vol{
    display: flex;
    align-items: center;
    border: 1px solid #55575a;
    background-color: #1c1e20;
    margin-top: 11px;
    height: 22px;
    padding: 0 3px;
    gap: 5px;
    font-size: 11px;
}
.vol svg{
    width: 12px;
    height: 12px;
}
.vol span{
    white-space: nowrap;
}
.vol input{
    appearance: none;
    width: 89px;
    height: 6px;
    background: linear-gradient(90deg, #58a8ea 76%, #3a3c40 76%);
}
.vol input::-webkit-slider-thumb{
    appearance: none;
    width: 8px;
    height: 8px;
    border-radius: 50%;
    background-color: #e4e4e4;
}

/* ---- project ---- */
.project{
    flex: 1;
    min-width: 0;
    display: flex;
    border: 3px solid #fafafa;
    border-width: 2px 3px 3px;
    border-radius: 7px;
    background-color: #24272b;
    padding: 4px 2px 3px 3px;
}
.tracklist{
    width: 364px;
    border-right: 2px solid #808285;
}
.tlbar{
    display: flex;
    gap: 10px;
    height: 25px;
    padding-right: 4px;
    border-bottom: 1px solid #808285;
}
.low{
    height: 20px;
}
.low svg{
    height: 14px;
}
.count{
    margin-left: auto;
}
.count span{
    width: 63px;
    padding-left: 4px;
    font: 12px/20px Roboto, sans-serif;
}
.tracks{
    padding-right: 9px;
    border-right: 4px solid #000;
    background-color: #000;
    height: 384px;
}
.track{
    display: flex;
    height: 45px;
    margin-bottom: 1px;
    background-color: #24272b;
}
.track.io{
    height: 19px;
}
.track p{
    font-size: 13px;
    line-height: 20px;
}
.track.io p{
    font-size: 12px;
    line-height: 20px;
    padding-left: 10px;
}
.track .no{
    width: 40px;
    background-color: #6c6e70;
    color: #1b1c1e;
    display: flex;
    justify-content: space-between;
    padding: 4px 5px 0 3px;
    height: 100%;
}
.track .no svg{
    height: 16px;
}
.io .no{
    padding-top: 2px;
}
.track.sel{
    background-color: #a2a3a4;
    color: #1e1f21;
}
.ms{
    display: flex;
    height: 19px;
    border: 1px solid #5b5d60;
    border-radius: 2px;
}
.track > .ms{
    margin: 2px 0 0 5px;
}
.ms button{
    width: 24px;
    font: bold 13px/17px "Noto Sans", sans-serif;
}
.ms svg{
    width: 12px;
}
.tinfo{
    padding: 2px 0 0 6px;
}
.tinfo p{
    padding-left: 4px;
    margin-bottom: 1px;
}
.row{
    display: flex;
    gap: 2px;
}
.row button{
    width: 23px;
}
.timeline{
    flex: 1;
    min-width: 0;
    display: flex;
    flex-direction: column;
}
.ruler{
    height: 25px;
    background-color: #1b1d20;
    position: relative;
    overflow: hidden;
}
.ruler span{
    position: absolute;
    top: 0;
    height: 24px;
    border-left: 1px solid #fff;
    padding: 8px 0 0 4px;
    font: bold 12px/18px "Noto Sans", sans-serif;
    color: #fff;
}
.arrange{
    flex: 1;
    position: relative;
    overflow: hidden;
}
.arrange i{
    position: absolute;
    top: 0;
    bottom: 0;
    width: 1px;
    background-color: #303336;
}
.arrange .bar{
    background-color: #56585b;
}
.arrange .cursor{
    background-color: #fff;
}
.ruler .cursor{
    position: absolute;
    top: 0;
    width: 1px;
    height: 25px;
    background-color: #fff;
}
.lane{
    height: 48px;
    border-bottom: 1px solid #3a3d40;
}
.lane.first{
    height: 20px;
}
.clip{
    position: relative;
    display: block;
    width: 100%;
    height: 42px;
    background-color: rgba(134, 135, 137, .9);
    border: solid #e8e8e8;
    border-width: 1px 0;
    margin-bottom: 4px;
}
.clip path{
    fill: #545658;
    stroke: #37393b;
    stroke-width: .5;
}
.hbar{
    display: flex;
    gap: 4px;
    height: 12px;
}
.hbar > *{
    background-color: #424447;
    border-radius: 2px;
}
.track-h{
    flex: 1;
    text-align: right;
    font: bold 15px/9px Roboto, sans-serif;
    padding-right: 6px;
    color: #fff;
}
.hbar .tri{
    width: 12px;
    font-size: 8px;
}
.zoomh{
    width: 84px;
    display: flex;
    align-items: center;
    justify-content: space-between;
    padding: 0 3px;
    color: #fff;
}
.zoomh svg, .vz svg, .vbar svg{
    width: 9px;
    height: 9px;
}
.zoomh input{
    appearance: none;
    width: 52px;
    height: 2px;
    background-color: #808285;
}
.zoomh input::-webkit-slider-thumb, .vz input::-webkit-slider-thumb{
    appearance: none;
    width: 8px;
    height: 8px;
    border-radius: 50%;
    background-color: #fff;
}
.vbar{
    width: 12px;
    display: flex;
    flex-direction: column;
    gap: 3px;
    padding-bottom: 12px;
    color: #fff;
}
.vbar > *{
    background-color: #424447;
    border-radius: 2px;
}
.vbar > .tri{
    height: 22px;
    font-size: 8px;
}
.vbar > .sq{
    height: 12px;
}
.vz{
    height: 84px;
    display: flex;
    flex-direction: column;
    align-items: center;
    justify-content: space-between;
    padding: 2px 0;
}
.vz.short{
    height: 49px;
    justify-content: center;
}
.vz input{
    appearance: none;
    writing-mode: vertical-lr;
    direction: rtl;
    width: 2px;
    height: 54px;
    background-color: #808285;
}
.vz.short input{
    height: 42px;
}
.vscroll{
    flex: 1;
    display: flex;
    flex-direction: column;
    justify-content: space-between;
    align-items: center;
    padding: 4px 0;
    color: #77797b;
}
.flip{
    transform: scaleY(-1);
}

/* ---- lower zone ---- */
.lower{
    flex: 1;
    display: flex;
    flex-direction: column;
    border: 2px solid #55575a;
    border-radius: 7px;
    background-color: #24272b;
    padding: 7px 6px 6px 7px;
}
.lowbar{
    display: flex;
    gap: 5px;
    height: 30px;
    border-bottom: 1px solid #55575a;
    padding-left: 981px;
}
.lowbar .w38{
    text-align: center;
    font: 12px/25px "Noto Sans", sans-serif;
}
.lowbody{
    flex: 1;
    display: flex;
    gap: 3px;
    padding-top: 4px;
}
.mixarea{
    flex: 1;
    padding-top: 86px;
}
.rule{
    height: 2px;
    background: linear-gradient(90deg, transparent 1002px, #66686b 1002px), repeating-linear-gradient(90deg, #ddd 0 3px, transparent 3px 5px);
}
.vthumb{
    width: 12px;
    background-color: #424447;
    border-radius: 2px;
    display: flex;
    flex-direction: column;
    align-items: center;
    padding: 2px 0;
    color: #fff;
}
.vthumb svg{
    width: 8px;
    height: 10px;
}
.vthumb i{
    width: 8px;
    flex: 1;
    margin: 6px 0 158px;
    background-color: #f2f3f3;
    border-radius: 3px;
}
.lowscroll{
    height: 12px;
    margin: 3px 15px 0 0;
    background-color: #424447;
    text-align: right;
    padding-right: 6px;
    font: 15px/9px Roboto, sans-serif;
    color: #77797b;
}
.lowtabs{
    display: flex;
    height: 21px;
    text-align: center;
    font: bold 12px/25px Roboto, "Noto Sans CJK JP", sans-serif;
    white-space: nowrap;
}
.lowtabs .box{
    background-color: #24272b;
    border: 2px solid #55575a;
    border-top: 0;
}
.t1{ width: 75px; }
.t2{ width: 83px; }
.t3{ width: 45px; padding-left: 24px; }
.t4{ width: 108px; }
.t5{ width: 82px; }
.t6{ width: 128px; }
.t7{ width: 136px; }
.t8{ width: 94px; }
.t9{ width: 116px; }
.t2, .t5, .t7, .t8, .t1{ font-size: 10px; }

/* ---- transport ---- */
.transport{
    height: 40px;
    background-color: #25282c;
    display: flex;
    align-items: center;
    padding: 0 4px;
}
.m3{ margin-left: 3px; }
.m5{ margin-left: 5px; }
.m11{ margin-left: 11px; }
.dots{
    width: 6px;
    font: bold 16px/20px "DejaVu Sans", sans-serif;
    display: flex;
    justify-content: center;
}
.transport .aq{
    width: 38px;
    font-size: 14px;
}
.loc{
    margin-left: 121px;
}
.field{
    white-space: pre;
    text-align: right;
    font: 15px/25px "Open Sans", sans-serif;
    padding-right: 7px;
}
.lowbar .field{
    padding: 0;
}
.pos{ width: 124px; }
.time{ width: 125px; }
.tempo{
    width: 81px;
    font: 13px/25px Roboto, sans-serif;
    display: flex;
    align-items: center;
    justify-content: space-between;
    padding-left: 12px;
}
.tempo svg{
    width: 10px;
}
.sig{
    width: 51px;
    text-align: center;
    font: 13px/25px Roboto, sans-serif;
    padding: 0;
}
.transport .tap{
    width: 50px;
}
.play{
    display: flex;
    height: 32px;
    border: 2px solid #c6c7c8;
    border-radius: 3px;
    background-color: #626467;
    margin-left: 5px;
}
.play button{
    width: 37px;
    color: #e2e2e2;
}
.play .wide{
    width: 50px;
}
.play .go{
    background-color: #37d637;
    color: #0c2e0c;
}
.transport .moon{
    width: 38px;
}
.transport .ic{
    width: 25px;
}
.meter{
    width: 90px;
    align-items: flex-end;
    padding: 0 4px 2px 0;
}
.meter .cell{
    width: 26px;
    height: 23px;
    border-right: 1px solid #5a5c5f;
    margin-right: auto;
}
.b1{
    width: 17px;
    height: 4px;
    background-color: #35c8dc;
    margin-right: 5px;
}
.b2{
    width: 7px;
    height: 15px;
    background: linear-gradient(#3ee6b8, #20d4e8);
    margin-right: 1px;
}
.b3{
    width: 4px;
    height: 21px;
    background-color: #dc1414;
    margin-left: 4px;
}

/* ---- photo viewer, floats over the workspace ---- */
.viewer{
    position: absolute;
    left: 95px;
    top: 281px;
    width: 988px;
    border: solid #237d8b;
    border-color: #27808f #237d8b #1f6f79;
    border-width: 15px 14px;
    border-radius: 16px;
    background-color: #1f1f1f;
    color: #fff;
    font-family: "Noto Sans", "Noto Sans CJK JP", sans-serif;
}
.viewer svg{
    width: 18px;
    height: 18px;
}
.vhead{
    display: flex;
    height: 56px;
    padding: 5px 0 0 6px;
}
.vhead button{
    width: 44px;
    height: 36px;
}
.vhead .edit{
    width: 68px;
    margin-right: 2px;
    gap: 7px;
    background-color: #72d3d9;
    border-radius: 4px;
    color: #10292b;
    font-size: 12px;
}
.vhead .more{
    font-size: 11px;
}
.fname{
    width: 136px;
    margin: 0 39px 0 77px;
    text-align: center;
    font-size: 11px;
    line-height: 37px;
    white-space: nowrap;
}
.vsep{
    width: 1px;
    height: 32px;
    background-color: #3c3c3c;
}
.vhead .vsep{
    margin: 2px 7px 0;
}
.vhead .wb{
    width: 48px;
}
.vhead .wb svg{
    width: 16px;
    height: 16px;
}
.sheet{
    background-color: #fff;
    color: #111;
}
.sheet table{
    width: 100%;
    table-layout: fixed;
    border-collapse: collapse;
    font: 16px/20px "Liberation Sans", "Noto Sans CJK JP", sans-serif;
    font-feature-settings: normal;
}
.c0{ width: 26px; }
.c1{ width: 420px; }
.c2{ width: 123px; }
.c3{ width: 124px; }
.c4{ width: 252px; }
.sheet tr{
    height: 25px;
}
.sheet tr:nth-child(even){
    height: 26px;
}
.sheet td, .sheet th{
    border: 1px solid #ddd;
    padding: 0 4px 1px;
    vertical-align: bottom;
    white-space: nowrap;
}
.sheet th{
    border-left: 0;
    border-right-color: #bbb;
    padding: 0;
    vertical-align: middle;
    overflow: hidden;
    text-align: left;
    text-indent: -10px;
    font-size: 13px;
    font-weight: normal;
    color: #555;
}
.sheet tr > :last-child{
    border-right: 0;
}
.sheet .c{
    border: 1px solid #111;
}
.sheet .gap{
    border-right-color: #111;
}
.sheet .mid{
    vertical-align: middle;
}
.sheet tr.hd{
    height: 27px;
}
.sheet .hd .k{
    border: 3px solid #000;
    border-top: 1px solid #bbb;
    vertical-align: middle;
}
.sheet .hd .k:nth-child(2){
    border-left: 1px solid #bbb;
}
.sheet tr.cut{
    height: 6px;
    line-height: 5px;
}
.sheet .cut td, .sheet .cut th{
    border-top: 0;
    border-bottom: 0;
    padding: 0;
}
.sheet .corner{
    background-color: #c4c4c4;
}
.sheet tr.r45{ height: 45px; }
.sheet tr.r104{ height: 104px; }
.sheet tr.r124{ height: 124px; }
.sheet .cur{
    background-color: #d3e0fb;
    color: #0b2a5c;
    font-weight: bold;
}
.vfoot{
    display: flex;
    align-items: center;
    height: 57px;
    border-top: 9px solid #1f1f1f;
    padding: 0 4px;
    background-color: #282828;
    border-radius: 0 0 6px 6px;
}
.vfoot button{
    width: 44px;
    height: 32px;
}
.vfoot .vsep{
    margin: 0 6px 0 8px;
}
.vfoot .gray, .meta{
    color: #7c7c7c;
}
.vfoot .meta{
    display: flex;
    align-items: center;
    gap: 9px;
    font-size: 13px;
    margin-left: 12px;
}
.vfoot .meta + .meta{
    margin-left: 15px;
}
.vfoot .meta svg{
    width: 13px;
    height: 13px;
}
.vfoot .fit{
    margin-left: 18px;
}
.vfoot .pct{
    width: 87px;
    background-color: #323232;
    border-radius: 4px;
    justify-content: space-between;
    padding: 0 14px 0 12px;
    font-size: 13px;
}
.vfoot .pct svg{
    width: 10px;
    height: 10px;
}
.vfoot input{
    appearance: none;
    width: 135px;
    height: 4px;
    border-radius: 2px;
    background: linear-gradient(90deg, #72d3d9 16%, #9c9c9c 16%);
}
.vfoot input::-webkit-slider-thumb{
    appearance: none;
    width: 20px;
    height: 20px;
    border-radius: 50%;
    background-color: #72d3d9;
    border: 5px solid #454545;
}
```
FILE: script.js
```js
let ruler = document.getElementById('ruler');
let arrange = document.getElementById('arrange');
let width = ruler.offsetWidth;
let barWidth = 70.36;
let start = 23;

// ruler and grid lines, every 2 bars
for (let i = -1; start + i * barWidth < width; i++) {
    let x = start + i * barWidth;
    if (i >= 0) {
        let mark = document.createElement('span');
        mark.textContent = 27 + i * 2;
        mark.style.left = Math.round(x) + 'px';
        ruler.appendChild(mark);
    }
    for (let j = 0; j < 3; j++) {
        addLine(arrange, x + j * barWidth / 3, j == 0 ? 'bar' : '');
    }
}
addLine(arrange, 873, 'cursor');
addLine(ruler, 873, 'cursor');

function addLine(parent, x, name) {
    let line = document.createElement('i');
    line.className = name;
    line.style.left = Math.round(x) + 'px';
    if (name == 'cursor') {
        parent.appendChild(line);
    } else {
        parent.insertBefore(line, parent.firstChild);
    }
}

let seed = 7;
function random() {
    seed = (seed * 16807) % 2147483647;
    return seed / 2147483647;
}

// [from, to, level, roughness]
let clips = [
    [[0, 441, 0, 0], [441, 480, 5, .8], [480, 510, 7, .5], [510, 560, 3, .6], [560, 582, 5, .6], [582, 620, 4, .8], [620, 640, 8, .6], [640, 712, 3, .6], [718, 764, 6, 0], [764, 1074, 0, 0], [1074, 1092, 8, .9], [1092, 1145, 7, .7], [1145, 1215, 4, .6], [1215, 1255, 8, .9]],
    [[0, 441, 13, .6], [441, 470, 12, .9], [470, 520, 14, .4], [520, 600, 14, .5], [600, 625, 12, .9], [625, 860, 14, .55], [860, 925, 14, .5], [925, 1000, 11, .6], [1000, 1010, 9, .2], [1010, 1065, 4, .9], [1065, 1095, 12, .9], [1095, 1235, 14, .5], [1235, 1255, 11, .9]],
    [[0, 470, 10, .9], [470, 560, 8, .7], [560, 610, 9, .8], [610, 645, 11, .7], [645, 712, 7, .8], [718, 764, 8, 0], [764, 868, 0, 0], [868, 932, 11, .5], [932, 1000, 6, .6], [1000, 1062, 3, .6], [1062, 1074, 7, .3], [1074, 1095, 11, .9], [1095, 1180, 10, .8], [1180, 1215, 6, .7], [1215, 1255, 12, .9]]
];
function drawLane(parts, mid) {
    let top = [];
    let bottom = [];
    for (let [from, to, level, rough] of parts) {
        let swell = 1;
        let n = 0;
        for (let x = from; x <= to; x += 2.5) {
            if (rough && random() < .3) swell = .55 + random() * .5;
            let v = level * swell;
            if (rough) {
                v *= n % 2 ? 1 - random() * .2 : 1 - rough * (.7 + random() * .3);
            } else {
                v *= Math.min(1, (n + 1) / 4, (to - x + 2) / 9);
            }
            if (level) v = Math.max(v, 1);
            v = Math.min(v, 10);
            top.push(x + ' ' + (mid - v).toFixed(1));
            bottom.unshift(x + ' ' + (mid + v).toFixed(1));
            n++;
        }
        if (!level) {
            top.push(to + ' ' + mid);
            bottom.unshift(to + ' ' + mid);
        }
    }
    return 'M' + top.join('L') + 'L' + bottom.join('L') + 'Z';
}
document.querySelectorAll('.clip').forEach(function (clip, n) {
    let keep = seed;
    for (let mid of [10, 30]) {
        seed = keep;
        let path = document.createElementNS('http://www.w3.org/2000/svg', 'path');
        path.setAttribute('d', drawLane(clips[n], mid));
        clip.appendChild(path);
    }
});

// fader scale
let marks = [[0, 24], [6, 57], [12, 90], [18, 123], [24, 155], [30, 184], [40, 222], [50, 247]];
let html = '<rect width="28" height="274" rx="4" fill="#1b1d1f"/><rect x="32" width="28" height="274" rx="4" fill="#1b1d1f"/><rect x="13" y="20" width="2" height="237" fill="#050505"/>';
for (let [db, y] of marks) {
    html += `<path d="M18 ${y}h8M35 ${y}h3M56 ${y}h3" stroke="#55585a"/><text x="47" y="${y + 3}" text-anchor="middle" font-size="9" fill="#85888a">${db}</text>`;
}
document.getElementById('scale').innerHTML = html;
```
